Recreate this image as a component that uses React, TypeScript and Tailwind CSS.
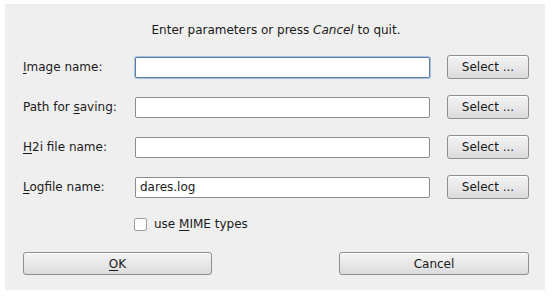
import { useState } from "react"

type Row = { pre: string; key: string; post: string; value: string; focus?: boolean }

const rows: Row[] = [
  { pre: "", key: "I", post: "mage name:", value: "", focus: true },
  { pre: "Path for ", key: "s", post: "aving:", value: "" },
  { pre: "", key: "H", post: "2i file name:", value: "" },
  { pre: "", key: "L", post: "ogfile name:", value: "dares.log" },
]

const btn =
  "rounded-[3px] border border-[#8e8e8e] bg-gradient-to-b from-[#f4f4f4] to-[#dcdcdc] text-[12px] text-[#1a1a1a] shadow-[inset_0_1px_0_#ffffff]"

export default function App() {
  const [mime, setMime] = useState(false)
  return (
    <div className="w-[552px] h-[296px] bg-white pt-[4px] pl-[5px] font-['DejaVu_Sans',sans-serif] text-[#1a1a1a]">
      <div className="w-[540px] h-[286px] bg-[#efefef] pt-[17px] pl-[18px] pr-[16px]">
        <p className="text-center text-[12px] h-[18px] leading-[18px]">
          Enter parameters or press <i>Cancel</i> to quit.
        </p>

        <div className="mt-[16px] flex flex-col gap-[16px]">
          {rows.map((r) => (
            <div key={r.key} className="flex items-center h-[24px]">
              <label className="w-[112px] shrink-0 text-[12px]">
                {r.pre}
                <span className="underline underline-offset-2">{r.key}</span>
                {r.post}
              </label>
              <input
                defaultValue={r.value}
                className={
                  "w-[295px] shrink-0 h-[21px] rounded-[2px] bg-white px-[4px] text-[12px] outline-none border " +
                  (r.focus ? "border-[#5a7ea6] shadow-[0_0_0_1px_#a9c2dd]" : "border-[#8c8c8c]")
                }
              />
              <button className={btn + " ml-[17px] w-[82px] h-[24px]"}>Select ...</button>
            </div>
          ))}
        </div>

        <label className="mt-[17px] ml-[111px] flex items-center gap-[7px] text-[12px] h-[16px]">
          <input
            type="checkbox"
            checked={mime}
            onChange={() => setMime(!mime)}
            className="appearance-none w-[13px] h-[13px] rounded-[2px] border border-[#a0a0a0] bg-white"
          />
          <span>
            use <span className="underline underline-offset-2">M</span>IME types
          </span>
        </label>

        <div className="mt-[20px] flex justify-between">
          <button className={btn + " w-[189px] h-[23px]"}>
            <span className="underline underline-offset-2">O</span>K
          </button>
          <button className={btn + " w-[190px] h-[23px]"}>Cancel</button>
        </div>
      </div>
    </div>
  )
}
